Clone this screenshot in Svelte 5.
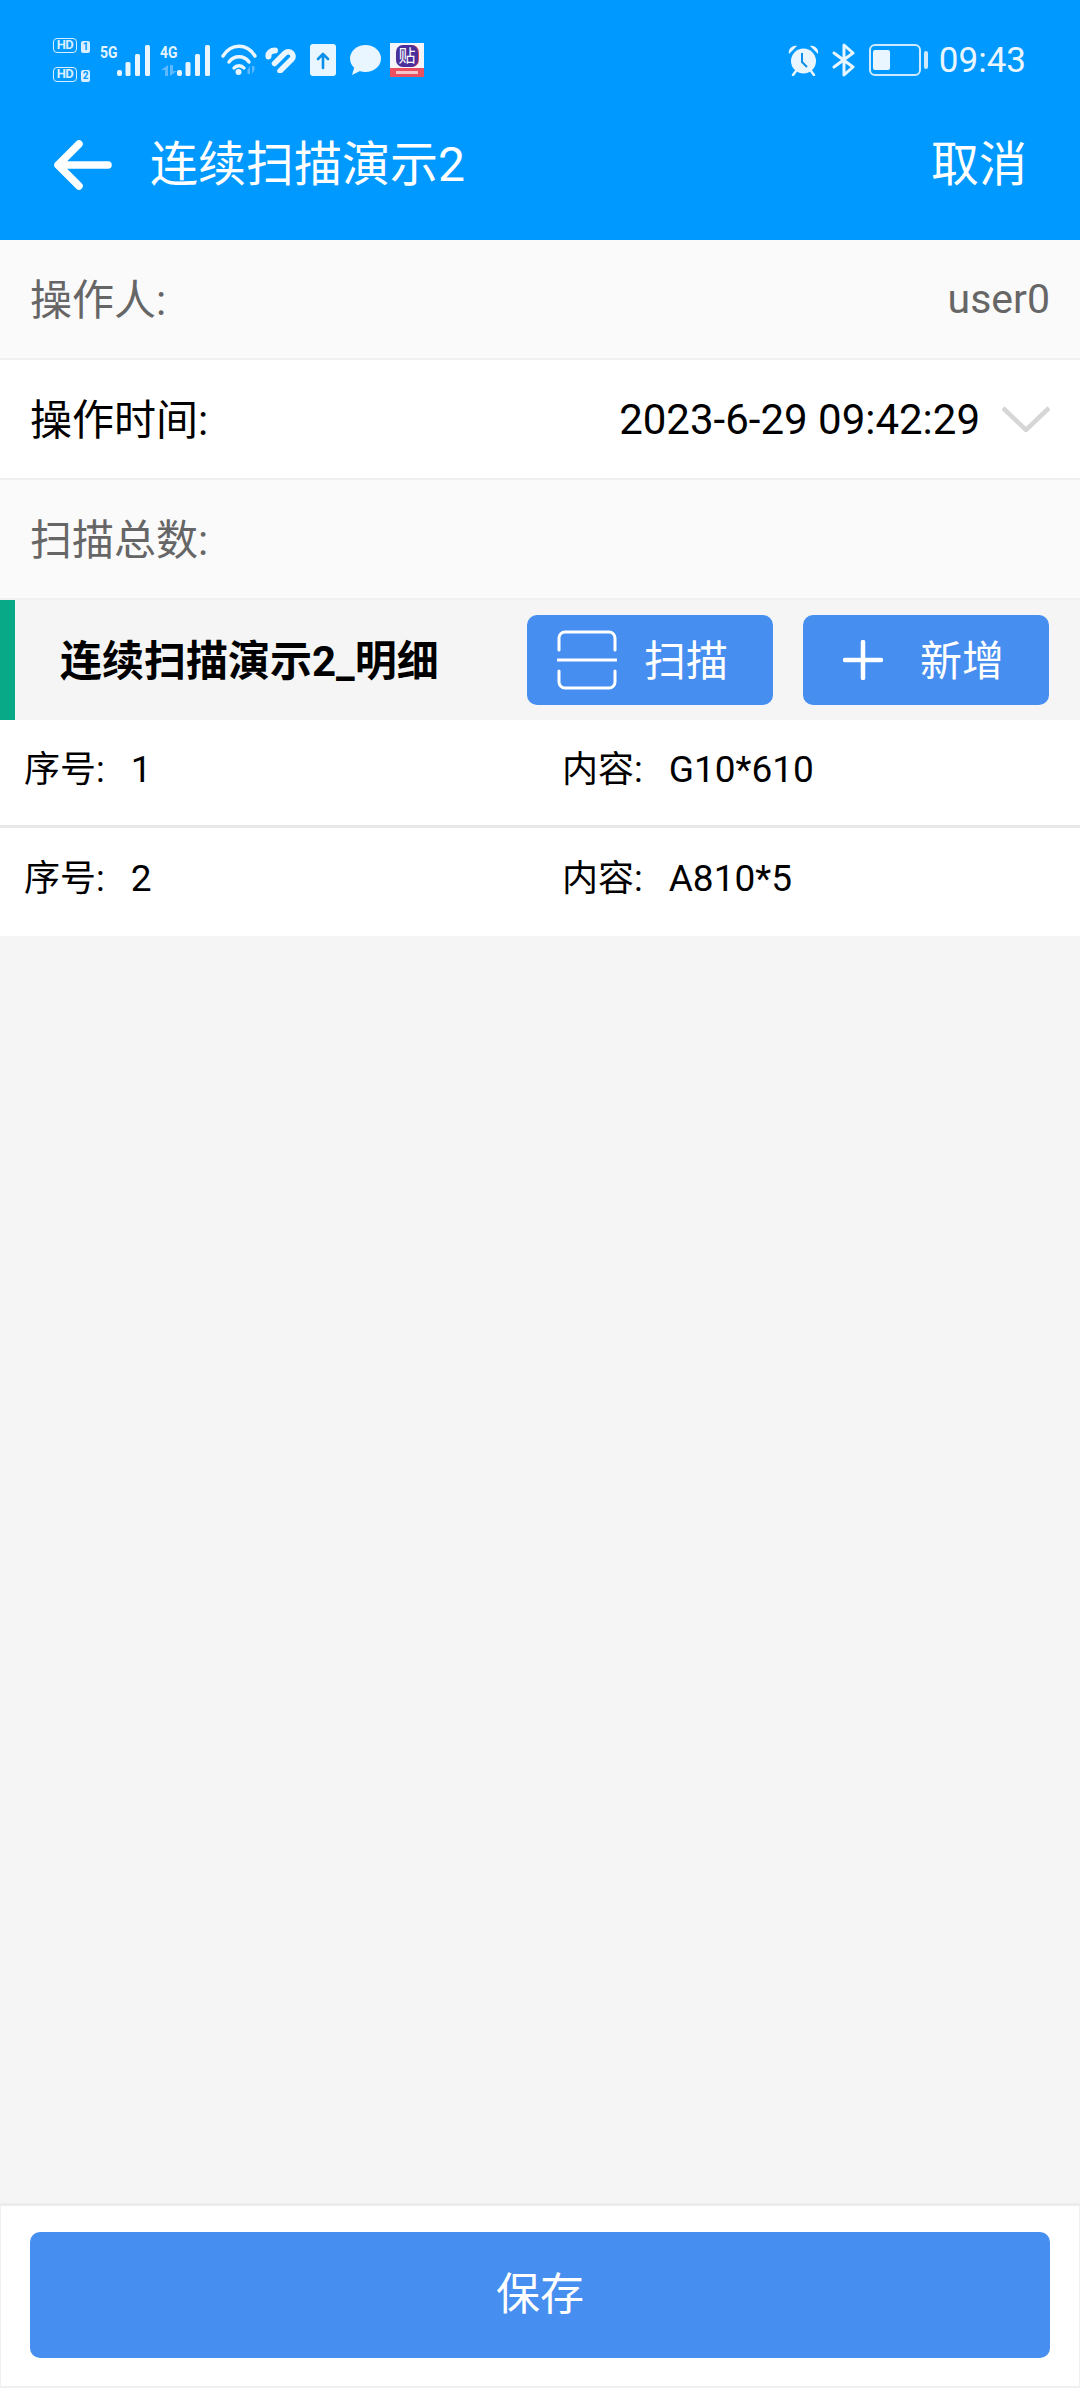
<script>
  const rows = [
    { no: '1', content: 'G10*610' },
    { no: '2', content: 'A810*5' }
  ];
</script>

<div class="page">
  <header class="top">
    <div class="status">
      <div class="status-left">
        <div class="sims">
          <div class="sim"><span class="hd">HD</span><span class="slot">1</span></div>
          <div class="sim"><span class="hd">HD</span><span class="slot">2</span></div>
        </div>
        <div class="net">
          <span class="net-label">5G</span>
          <svg width="33" height="31" viewBox="0 0 33 31"><g fill="#eaf6ff"><rect x="0" y="25" width="5" height="6" rx="2"/><rect x="8.5" y="17" width="5" height="14" rx="1.5"/><rect x="18" y="9" width="5" height="22" rx="1.5"/><rect x="28" y="0" width="5" height="31" rx="1.5"/></g></svg>
        </div>
        <div class="net">
          <span class="net-label">4G</span>
          <svg class="updown" width="16" height="11" viewBox="0 0 16 11" fill="#5cb8ff"><path d="M7 0v11H4V5H0zM9 11V0h3v6h4z"/></svg>
          <svg width="33" height="31" viewBox="0 0 33 31"><g fill="#eaf6ff"><rect x="0" y="25" width="5" height="6" rx="2"/><rect x="8.5" y="17" width="5" height="14" rx="1.5"/><rect x="18" y="9" width="5" height="22" rx="1.5"/><rect x="28" y="0" width="5" height="31" rx="1.5"/></g></svg>
        </div>
        <svg class="wifi" width="36" height="32" viewBox="0 0 36 32" fill="none" stroke="#eaf6ff" stroke-width="3.4" stroke-linecap="round"><path d="M2 12C10-1 26-1 34 12"/><path d="M8 18c5-7 15-7 20 0"/><path d="M13 24c2.500-3 7.500-3 10 0"/><circle cx="17.500" cy="28" r="3" fill="#eaf6ff" stroke="none"/><path d="M29 22v8h-2.500v-4l-2.500 4zM31 30v-8h2.500v4l2.500-4z" fill="#5cb8ff" stroke="none"/></svg>
        <svg class="heart" width="32" height="26" viewBox="0 0 32 26" fill="none" stroke="#eaf6ff" stroke-width="5.500" stroke-linecap="round"><path d="M15 24L27 12c3.500-4-2.500-10-7-6L9.500 16.500"/><path d="M3.500 9.500C3 6 6 3.500 10 3.500" stroke-width="6"/></svg>
        <svg class="upload" width="26" height="32" viewBox="0 0 26 32"><rect width="26" height="32" rx="3" fill="#eaf6ff"/><path d="M13 24V10M8 15l5-5 5 5" fill="none" stroke="#0a8fe8" stroke-width="2.600" stroke-linecap="round" stroke-linejoin="round"/></svg>
        <svg class="bubble" width="31" height="30" viewBox="0 0 31 30" fill="#eaf6ff"><ellipse cx="15.500" cy="13.500" rx="15.500" ry="13.500"/><path d="M2 30l3-10 7 5z"/></svg>
        <div class="tie">
          <div class="tie-top"><span>贴</span></div>
          <div class="tie-bottom"><i></i></div>
        </div>
      </div>
      <div class="status-right">
        <svg width="31" height="31" viewBox="0 0 31 31"><circle cx="15.500" cy="16" r="12.500" fill="#eaf6ff"/><path d="M1 9C0 4 4 0 9 1zM30 9c1-5-3-9-8-8z" fill="#eaf6ff"/><path d="M5 30l3-4M26 30l-3-4" stroke="#eaf6ff" stroke-width="2.500" stroke-linecap="round"/><path d="M14 8v9l5 5" fill="none" stroke="#0a8fe8" stroke-width="2"/></svg>
        <svg class="bt" width="23" height="34" viewBox="0 0 23 34" fill="none" stroke="#eaf6ff" stroke-width="3" stroke-linejoin="round" stroke-linecap="round"><path d="M2 10l19 14-9 8V2l9 8L2 24"/></svg>
        <div class="battery"><div class="battery-body"><div class="battery-fill"></div></div><div class="battery-tip"></div></div>
        <span class="clock">09:43</span>
      </div>
    </div>
    <div class="nav">
      <div class="nav-left">
        <svg width="59" height="50" viewBox="0 0 59 50" fill="none" stroke="#fff" stroke-width="7.500" stroke-linecap="round" stroke-linejoin="round"><path d="M55 25H5M26 4L5 25l21 21"/></svg>
        <span class="title">连续扫描演示2</span>
      </div>
      <span class="cancel">取消</span>
    </div>
  </header>

  <section class="form">
    <div class="row muted"><span class="label">操作人:</span><span class="value-user">user0</span></div>
    <div class="row"><span class="label">操作时间:</span>
      <div class="time">
        <span>2023-6-29 09:42:29</span>
        <svg width="48" height="26" viewBox="0 0 48 26" fill="none" stroke="#d6d6d6" stroke-width="4.500"><path d="M1 2l23 22L47 2"/></svg>
      </div>
    </div>
    <div class="row muted"><span class="label">扫描总数:</span></div>
  </section>

  <div class="section-head">
    <span class="section-title">连续扫描演示2_明细</span>
    <div class="actions">
      <button class="btn scan">
        <svg width="60" height="60" viewBox="0 0 60 60" fill="none" stroke="#fff" stroke-width="3" stroke-linecap="round"><path d="M2 20V8a6 6 0 0 1 6-6h44a6 6 0 0 1 6 6v12M0.500 30h59M2 41v11a6 6 0 0 0 6 6h44a6 6 0 0 0 6-6V41"/></svg>
        <span class="btn-text">扫描</span>
      </button>
      <button class="btn add">
        <svg width="40" height="40" viewBox="0 0 40 40" fill="none" stroke="#fff" stroke-width="4.500" stroke-linecap="round"><path d="M20 2v36M2 20h36"/></svg>
        <span class="btn-text">新增</span>
      </button>
    </div>
  </div>

  <ul class="list">
    {#each rows as r}
      <li class="item">
        <div class="cell"><span class="cell-label">序号:</span><span class="cell-value">{r.no}</span></div>
        <div class="cell"><span class="cell-label">内容:</span><span class="cell-value">{r.content}</span></div>
      </li>
    {/each}
  </ul>

  <div class="spacer"></div>

  <footer class="bottom">
    <button class="save">保存</button>
  </footer>
</div>

<style>
  :global(body) {
    margin: 0;
    background: #f5f5f5;
  }
  .page {
    width: 1080px;
    height: 2388px;
    display: flex;
    flex-direction: column;
    font-family: Roboto, "Noto Sans CJK SC", sans-serif;
    background: #f5f5f5;
    overflow: hidden;
  }
  .top {
    height: 240px;
    background: #0099ff;
    color: #fff;
    flex: none;
  }
  .status {
    height: 118px;
    padding: 38px 54px 0 53px;
    box-sizing: border-box;
    display: flex;
    justify-content: space-between;
    align-items: flex-start;
  }
  .status-left {
    display: flex;
    align-items: center;
    height: 44px;
  }
  .status-right {
    display: flex;
    align-items: center;
    height: 44px;
    color: #eaf6ff;
  }
  .sims {
    display: flex;
    flex-direction: column;
    gap: 14px;
    width: 37px;
  }
  .sim {
    display: flex;
    align-items: flex-end;
    gap: 4px;
  }
  .hd {
    box-sizing: border-box;
    width: 24px;
    height: 15px;
    font-size: 13px;
    font-weight: 700;
    line-height: 12px;
    letter-spacing: -0.5px;
    text-align: center;
    border: 1.5px solid #d8efff;
    border-radius: 4px;
    color: #d8efff;
  }
  .slot {
    font-size: 10px;
    font-weight: 700;
    line-height: 12px;
    width: 9px;
    text-align: center;
    background: #d8efff;
    color: #0099ff;
    border-radius: 2px;
  }
  .net {
    position: relative;
    width: 50px;
    height: 31px;
    margin-left: 10px;
    display: flex;
    justify-content: flex-end;
  }
  .net-label {
    position: absolute;
    left: 0;
    top: 0;
    font-size: 17px;
    font-weight: 700;
    line-height: 15px;
    color: #e4f4ff;
    transform: scaleX(0.82);
    transform-origin: left;
  }
  .updown {
    position: absolute;
    left: 1px;
    bottom: 0;
  }
  .wifi { margin-left: 11px; }
  .heart { margin-left: 8px; }
  .upload { margin-left: 13px; }
  .bubble { margin-left: 14px; }
  .tie {
    margin-left: 9px;
    width: 34px;
    height: 34px;
    background: #f4f4fa;
    display: flex;
    flex-direction: column;
  }
  .tie-top {
    flex: 1;
    display: flex;
    align-items: center;
    justify-content: center;
  }
  .tie-top span {
    width: 22px;
    height: 22px;
    border-radius: 7px;
    background: #4a2f9a;
    color: #fff;
    font-size: 17px;
    line-height: 22px;
    text-align: center;
    box-shadow: 1px 0 0 #d9506a;
  }
  .tie-bottom {
    height: 9px;
    background: #ea5060;
    display: flex;
    align-items: center;
    justify-content: center;
  }
  .tie-bottom i {
    width: 22px;
    height: 3px;
    background: #f7c4cb;
  }
  .bt { margin-left: 13px; }
  .battery {
    margin-left: 14px;
    display: flex;
    align-items: center;
    gap: 3px;
  }
  .battery-body {
    width: 52px;
    height: 32px;
    box-sizing: border-box;
    border: 2.5px solid #cfeaff;
    border-radius: 6px;
    padding: 4px 2.5px;
  }
  .battery-fill {
    width: 17px;
    height: 100%;
    background: #eaf6ff;
    border-radius: 2px;
  }
  .battery-tip {
    width: 4px;
    height: 18px;
    background: #cfeaff;
    border-radius: 2px;
  }
  .clock {
    margin-left: 11px;
    font-size: 35px;
  }
  .nav {
    height: 94px;
    padding: 0 53px;
    display: flex;
    align-items: center;
    justify-content: space-between;
  }
  .nav-left {
    display: flex;
    align-items: center;
  }
  .title {
    margin-left: 38px;
    margin-bottom: 10px;
    font-size: 48px;
  }
  .cancel {
    margin-bottom: 10px;
    font-size: 48px;
  }
  .form { flex: none; }
  .row {
    height: 120px;
    box-sizing: border-box;
    border-bottom: 2px solid #f0f0f0;
    padding: 0 30px;
    display: flex;
    align-items: center;
    justify-content: space-between;
    background: #fff;
    color: #000;
    font-size: 42px;
  }
  .row.muted {
    background: #fafafa;
    color: #666;
  }
  .label {
    margin-bottom: 6px;
  }
  .value-user {
    font-size: 41px;
  }
  .time {
    display: flex;
    align-items: center;
    gap: 22px;
  }
  .section-head {
    height: 120px;
    box-sizing: border-box;
    flex: none;
    border-left: 15px solid #07a987;
    padding: 0 31px 0 45px;
    display: flex;
    align-items: center;
    justify-content: space-between;
    background: #f5f5f5;
  }
  .section-title {
    margin-bottom: 6px;
    font-size: 42px;
    font-weight: 700;
    color: #000;
  }
  .actions {
    display: flex;
    gap: 30px;
  }
  .btn {
    width: 246px;
    height: 90px;
    border: 0;
    border-radius: 10px;
    background: #468ef0;
    color: #fff;
    font: inherit;
    font-size: 42px;
    display: flex;
    align-items: center;
    padding: 0;
  }
  .btn.scan {
    padding-left: 30px;
    gap: 27px;
  }
  .btn.add {
    padding-left: 40px;
    gap: 37px;
  }
  .btn-text {
    margin-bottom: 6px;
  }
  .list {
    list-style: none;
    margin: 0;
    padding: 0;
    flex: none;
  }
  .item {
    height: 108px;
    box-sizing: border-box;
    border-bottom: 3px solid #e8e8e8;
    background: #fff;
    display: grid;
    grid-template-columns: 538px 1fr;
    align-items: center;
    padding-left: 24px;
    padding-bottom: 13px;
    font-size: 36px;
    color: #000;
  }
  .item:last-child {
    border-bottom: 0;
    padding-bottom: 14px;
  }
  .cell {
    display: flex;
    align-items: baseline;
  }
  .cell-label {
    margin-right: 26px;
  }
  .cell-value {
    font-size: 37px;
  }
  .spacer {
    flex: 1;
  }
  .bottom {
    flex: none;
    height: 185px;
    box-sizing: border-box;
    border-top: 3px solid #ececec;
    border-bottom: 2px solid #f0f0f0;
    border-left: 1px solid #f0f0f0;
    border-right: 1px solid #f0f0f0;
    background: #fff;
    padding: 26px 29px 0;
  }
  .save {
    display: block;
    width: 100%;
    height: 126px;
    padding: 0 0 8px;
    border: 0;
    border-radius: 10px;
    background: #468ef0;
    color: #fff;
    font: inherit;
    font-size: 44px;
  }
</style>
